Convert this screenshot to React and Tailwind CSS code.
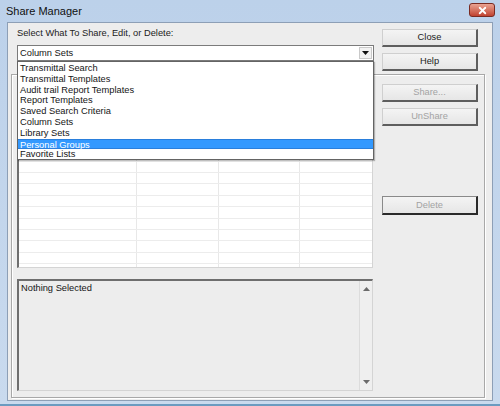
import { X } from 'lucide-react'

const ITEMS = [
  'Transmittal Search',
  'Transmittal Templates',
  'Audit trail Report Templates',
  'Report Templates',
  'Saved Search Criteria',
  'Column Sets',
  'Library Sets',
  'Personal Groups',
  'Favorite Lists',
]
const SELECTED = 'Personal Groups'
const ROWS = Array.from({ length: 16 })

function Btn({ children, disabled, strong }) {
  return (
    <button
      className={`w-[96px] h-[18px] flex items-center justify-center bg-gradient-to-b from-[#f4f4f4] to-[#e6e6e6] border
        ${strong ? 'h-[19px] border-[#8a8a8a] border-r-[#2a2a2a] border-b-[#2a2a2a] border-r-2 border-b-2' : 'border-[#cfcfcf] border-r-[#5e5e5e] border-b-[#5e5e5e] border-r-2 border-b-2'}
        ${disabled ? 'text-[#a3a3a3]' : 'text-[#222]'}`}
    >
      {children}
    </button>
  )
}

function Tri({ up }) {
  return (
    <svg width="7" height="4" viewBox="0 0 7 4">
      <path d={up ? 'M0 4 L3.5 0 L7 4 Z' : 'M0 0 L7 0 L3.5 4 Z'} fill="#6b6b6b" />
    </svg>
  )
}

export default function App() {
  return (
    <div className="w-[500px] h-[406px] overflow-hidden flex flex-col bg-gradient-to-b from-[#bcd1ea] to-[#c9daee] border-b-2 border-[#6b9bc0] font-['Liberation_Sans',Arial,sans-serif] text-[9.3px] leading-[11px] text-[#151515]">
      {/* title bar */}
      <div className="h-[22px] shrink-0 flex items-center justify-between pl-[6px] pr-[5px]">
        <span className="text-[11px] text-[#101010] mt-[1px]">Share Manager</span>
        <div className="w-[26px] h-[14px] mt-[-2px] rounded-[3px] border border-[#7a2b22] bg-gradient-to-b from-[#e9a393] to-[#c0412f] flex items-center justify-center">
          <X size={11} strokeWidth={4} className="text-white" />
        </div>
      </div>

      {/* client area */}
      <div className="relative mx-[7px] h-[379px] bg-[#ededed] border border-[#8d9fb6]">
        <div className="flex h-[51px]">
          <div className="pl-[9px] pt-[5px] w-[365px]">
            <div className="text-[#222]">Select What To Share, Edit, or Delete:</div>
            <div className="mt-[6px] h-[16px] w-[357px] bg-white border border-[#7b7b7b] flex items-center justify-between pl-[2px] pr-[1px]">
              <span>Column Sets</span>
              <div className="w-[13px] h-[12px] bg-[#f2f2f2] border border-[#c9c9c9] flex items-center justify-center">
                <svg width="7" height="4" viewBox="0 0 7 4"><path d="M0 0 L7 0 L3.5 4 Z" fill="#111" /></svg>
              </div>
            </div>
          </div>
          <div className="ml-[9px] pt-[6px] flex flex-col gap-[6px]">
            <Btn>Close</Btn>
            <Btn>Help</Btn>
          </div>
        </div>

        {/* group box */}
        <div className="ml-[3px] w-[474px] h-[324px] border border-[#a8a8a8] shadow-[inset_1px_1px_0_#fff,1px_1px_0_#fff] flex pl-[5px] pt-[9px]">
          <div className="w-[356px] flex flex-col">
            <div className="h-[184px] bg-white border-t-2 border-l-2 border-[#6e6e6e] border-r border-b border-r-[#d4d4d4] border-b-[#d4d4d4] overflow-hidden">
              <div className="h-[18.6px] grid grid-cols-[118px_82px_81px_1fr] border-b border-[#ececec]">
                <div className="border-r border-[#e8e8e8]" />
                <div className="border-r border-[#e8e8e8]" />
                <div className="border-r border-[#e8e8e8]" />
                <div />
              </div>
              {ROWS.map((_, i) => (
                <div key={i} className="h-[11.4px] grid grid-cols-[118px_82px_81px_1fr] border-b border-[#ececec]">
                  <div className="border-r border-[#e8e8e8]" />
                  <div className="border-r border-[#e8e8e8]" />
                  <div className="border-r border-[#e8e8e8]" />
                  <div />
                </div>
              ))}
            </div>
            <div className="mt-[11px] h-[112px] bg-[#ededed] border-t-2 border-l-2 border-[#6e6e6e] border-r border-b border-r-[#d4d4d4] border-b-[#d4d4d4] flex">
              <div className="flex-1 pl-[2px] pt-[2px]">Nothing Selected</div>
              <div className="w-[13px] border-l border-[#dcdcdc] bg-[#efefef] flex flex-col justify-between items-center py-[6px]">
                <Tri up />
                <Tri />
              </div>
            </div>
          </div>
          <div className="ml-[9px] flex flex-col">
            <Btn disabled>Share...</Btn>
            <div className="mt-[6px]"><Btn disabled>UnShare</Btn></div>
            <div className="mt-[70px]"><Btn disabled strong>Delete</Btn></div>
          </div>
        </div>

        {/* open dropdown of the combo box */}
        <div className="absolute left-[9px] top-[38px] w-[357px] h-[99px] bg-white border border-[#646464] shadow-[1px_1px_1px_rgba(0,0,0,0.25)] pt-[1px]">
          {ITEMS.map(it => (
            <div
              key={it}
              className={`h-[10.8px] leading-[10.8px] pl-[2px] ${it === SELECTED ? 'bg-[#3399ff] text-white border-y border-[#2a7fdc]' : ''}`}
            >
              {it}
            </div>
          ))}
        </div>
      </div>
    </div>
  )
}
